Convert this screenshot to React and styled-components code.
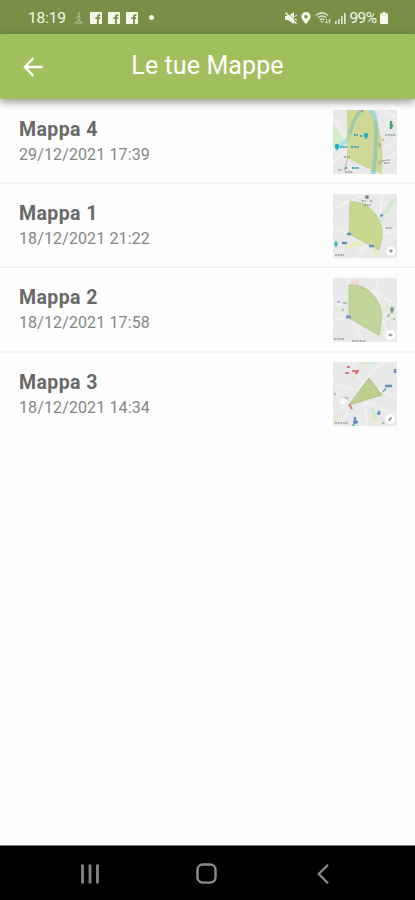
import styled, { createGlobalStyle } from "styled-components";

const GlobalStyle = createGlobalStyle`
  * {
    box-sizing: border-box;
  }

  body {
    margin: 0;
    background: #fff;
    font-family: Roboto, "Liberation Sans", sans-serif;
  }
`;

const Screen = styled.div`
  display: flex;
  flex-direction: column;
  width: 100%;
  height: 900px;
  background: #fefefe;
`;

const StatusBar = styled.div`
  display: flex;
  align-items: center;
  justify-content: space-between;
  height: 34px;
  padding: 1px 27px 0 28px;
  background: #778f46;
  color: #f5f8ea;
`;

const StatusGroup = styled.div`
  display: flex;
  align-items: center;
  gap: ${(props) => props.$gap}px;
`;

const StatusText = styled.span`
  width: ${(props) => props.$width}px;
  font-size: 15.5px;
  line-height: 18px;
  letter-spacing: ${(props) => props.$spacing || 0}px;
  white-space: nowrap;
`;

const Glyph = styled.svg`
  display: block;
  flex: none;
  opacity: ${(props) => props.$opacity || 1};
`;

const Dot = styled.span`
  width: 5px;
  height: 5px;
  margin-left: 4.5px;
  border-radius: 50%;
  background: #f5f8ea;
`;

const Header = styled.header`
  display: grid;
  grid-template-columns: 66px 1fr 66px;
  align-items: center;
  height: 65px;
  flex: none;
  background: #a1c05d;
  color: #fff;
  box-shadow: 0 3px 8px rgba(40, 50, 40, 0.5);
  z-index: 1;
`;

const BackButton = styled.button`
  display: flex;
  align-items: center;
  justify-content: center;
  height: 65px;
  padding: 0;
  border: 0;
  background: none;
  color: inherit;
`;

const Title = styled.h1`
  margin: 0;
  padding-bottom: 1px;
  font-size: 25px;
  font-weight: 400;
  line-height: 30px;
  letter-spacing: 0.1px;
  text-align: center;
  white-space: nowrap;
`;

const List = styled.ul`
  flex: 1;
  margin: 0;
  padding: 1px 0 0;
  list-style: none;
`;

const Row = styled.li`
  display: flex;
  align-items: center;
  justify-content: space-between;
  height: 84.2px;
  padding: 1px 18px 0 19px;
  border-bottom: 2px solid #f3f3f3;

  &:last-child {
    border-color: transparent;
  }
`;

const Info = styled.div`
  padding-top: 1px;
`;

const Name = styled.div`
  color: #686868;
  font-size: 19.5px;
  font-weight: 700;
  line-height: 26px;
  letter-spacing: 0.4px;
`;

const CreatedAt = styled.div`
  color: #858585;
  font-size: 16px;
  line-height: 24px;
  letter-spacing: 0.12px;
`;

const Thumb = styled.svg`
  display: block;
  width: 64px;
  height: 64px;
  background: #e8e9e8;
`;

const NavBar = styled.nav`
  display: grid;
  grid-template-columns: 116px 22px 1fr;
  align-items: center;
  height: 55px;
  padding: 1px 86px 0 80px;
  border-top: 1px solid #777;
  background: #000;

  > :last-child {
    justify-self: end;
  }
`;

const Facebook = () => (
  <Glyph width="12" height="12" viewBox="0 0 12 12">
    <rect width="12" height="12" rx="1" fill="#f5f8ea" />
    <path d="M7 12V7H5.4V5.2H7V4.2Q7 2.2 9 2.2H10.4V3.9H9.4Q8.8 3.9 8.8 4.5V5.2H10.4L10.1 7H8.8V12Z" fill="#778f46" />
  </Glyph>
);

const MapFour = () => (
  <Thumb viewBox="0 0 64 64">
    <path d="M0 14L7 24L12 32L0 37Z" fill="#d5ebca" />
    <path d="M0 8L12 27M0 52L14 40M50 0L64 8M49 38L64 30M50 50L64 43" stroke="#f5f5f5" strokeWidth="1.4" />
    <path d="M28 0C20 10 18 17 17 24C15 32 8 36 2 39" fill="none" stroke="#a8dcf3" strokeWidth="4" />
    <path d="M38 0C44 9 44 22 43 34S41 53 40 64" fill="none" stroke="#9ed9e8" strokeWidth="5" />
    <path d="M14 0H35Q43 7 46 20Q51 34 49 64L32 57L14 48Z" fill="#c3cf6e" fillOpacity=".67" />
    <path d="M28 0C20 10 18 17 17 24M43 12C44 28 42 45 41 62" fill="none" stroke="#8fc7b0" strokeWidth="3" opacity=".75" />
    <path d="M15 47L11 61" stroke="#eea49c" />
    <g fill="#20b3bf">
      <circle cx="33" cy="25" r="2.2" />
      <path d="M31 26H35L33 30Z" />
      <circle cx="4" cy="36" r="2.2" />
      <path d="M2 37H6L4 41Z" />
    </g>
    <path d="M21 25H25M27 26H30M7 37H14M18 37H26M12 58H15M19 58H26" stroke="#43a7ba" strokeWidth="1.8" strokeDasharray="2 .8" />
    <path d="M58 11V19M57 15L60 16" stroke="#38a36c" strokeWidth="2.4" />
    <path d="M52 25H63M46 54Q47 50 57 50M51 53H57M5 60H9M12 62H20M28 1H31M11 47H17" fill="none" stroke="#7c8585" strokeWidth="1.3" strokeDasharray="2 .7" opacity=".75" />
    <path d="M46 33L47 37M50 29V31" stroke="#cf8a76" strokeWidth="1.2" />
  </Thumb>
);

const MapOne = () => (
  <Thumb viewBox="0 0 64 64">
    <path d="M0 15L17 7L34 0M0 34L16 40L30 33M50 0L44 30L64 44M0 61L29 46L64 36M22 64L35 49" fill="none" stroke="#f1f2f1" strokeWidth="1.5" />
    <path d="M64 4Q56 10 55 17Q48 17 49 28" fill="none" stroke="#d1e9d1" strokeWidth="3" />
    <path d="M12 54L29 48M41 55L46 63" stroke="#eeecad" strokeWidth="3" />
    <path d="M17 7L31 10Q42 17 47 28Q50 35 49 44L46 56L16 40Z" fill="#c9d891" stroke="#b9c981" strokeWidth=".8" />
    <path d="M19 33L30 18M25 42L42 26M31 49L46 38" stroke="#d8e47b" strokeWidth="1" opacity=".5" />
    <circle cx="34" cy="3" r="2" fill="#858c8c" />
    <path d="M31 11H38M53 34H59M29 7H33M37 7H40" stroke="#7d8787" strokeWidth="1.4" strokeDasharray="2 .8" opacity=".75" />
    <path d="M14 40H18M9 49H14M36 52H41M47 22L50 21" stroke="#6a93c4" strokeWidth="2.3" />
    <path d="M3 47V53M1 50H5" stroke="#53b9b9" strokeWidth="2" />
    <path d="M2 61H11" stroke="#7a7a7a" strokeWidth="1.5" strokeDasharray="2 .7" opacity=".75" />
    <circle cx="58" cy="57" r="4.5" fill="#fff" />
    <circle cx="58" cy="57" r="1.7" fill="#999" />
  </Thumb>
);

const MapTwo = () => (
  <Thumb viewBox="0 0 64 64">
    <path d="M0 24L15 29M0 43L17 39L31 64M12 0L17 8M38 12L64 27M49 44L64 37M43 0L47 30L56 64" fill="none" stroke="#f1f1f1" strokeWidth="1.5" />
    <path d="M2 30L9 33M48 47V62M54 27L59 44" stroke="#dfedcf" strokeWidth="3" />
    <path d="M16 5L26 1V7" fill="#f4d6cf" />
    <path d="M16 7Q31 6 40 17Q48 26 49 38L46 57L16 40Z" fill="#c0d69b" stroke="#abc489" strokeWidth=".8" />
    <path d="M13 39H18" stroke="#7190d3" strokeWidth="3" />
    <path d="M4 24H7M10 25H14M9 32H11M54 39L57 36M60 41H62" stroke="#8d9599" strokeWidth="1.6" opacity=".75" />
    <circle cx="59" cy="31" r="2" fill="#80999a" />
    <path d="M57 32H61L59 36Z" fill="#80999a" />
    <path d="M1 61H11M19 63H33" stroke="#858585" strokeWidth="1.4" strokeDasharray="2 .7" opacity=".75" />
    <circle cx="57.5" cy="57" r="5" fill="#fff" />
    <path d="M55.5 57H59.5M57.5 55.5V58.5" stroke="#999" strokeWidth="1.3" />
  </Thumb>
);

const MapThree = () => (
  <Thumb viewBox="0 0 64 64">
    <path d="M0 20L23 28L50 0M0 51L24 37L64 53M20 0L29 21L64 36M32 38L34 64M8 64L17 43L3 30" fill="none" stroke="#f2f2f2" strokeWidth="1.5" />
    <path d="M28 1H42M39 46L43 59M53 24H60" fill="none" stroke="#cfebd5" strokeWidth="3.5" />
    <path d="M18 18L30 2M0 60L8 52M35 53L46 61M49 31L59 19" stroke="#f5e6bd" strokeWidth="1.7" />
    <path d="M36 16L49 33L16 43Z" fill="#bccf8f" stroke="#a9be7d" strokeWidth=".8" />
    <path d="M12 11H16M19 9H26M14 5H17M22 11H25M16 42L19 47" stroke="#d9797d" strokeWidth="2" />
    <path d="M62 7V11M52 24H59M46 49V53M22 55V62M20 60H25" stroke="#6b8acb" strokeWidth="2.5" />
    <path d="M44 52L47 49M50 30L53 26M19 63H22" stroke="#56b2b4" strokeWidth="1.4" />
    <path d="M2 31V34M8 36H16M2 61H15M49 61H52" stroke="#8a8a8a" strokeWidth="1.4" strokeDasharray="2 .7" opacity=".75" />
    <circle cx="10" cy="39" r="3.5" fill="#f7faf7" />
    <circle cx="57" cy="57" r="5" fill="#fff" />
    <path d="M55.5 58.5L58.5 55.5" stroke="#777" strokeWidth="1.5" />
  </Thumb>
);

const maps = [
  { name: "Mappa 4", date: "29/12/2021 17:39", Preview: MapFour },
  { name: "Mappa 1", date: "18/12/2021 21:22", Preview: MapOne },
  { name: "Mappa 2", date: "18/12/2021 17:58", Preview: MapTwo },
  { name: "Mappa 3", date: "18/12/2021 14:34", Preview: MapThree },
];

const App = () => (
  <Screen>
    <GlobalStyle />
    <StatusBar>
      <StatusGroup $gap={6}>
        <StatusText $width={39} $spacing={-0.15}>18:19</StatusText>
        <Glyph width="11" height="12" viewBox="0 0 11 12" fill="none" stroke="#f5f8ea" $opacity={0.45}>
          <circle cx="6" cy="1.5" r="1" />
          <path d="M6 3V7L8 11M6 7L4 11M3 6L6 4L8 6M1 11H10" />
        </Glyph>
        <Facebook />
        <Facebook />
        <Facebook />
        <Dot />
      </StatusGroup>
      <StatusGroup $gap={4}>
        <Glyph width="12" height="12" viewBox="0 0 12 12" fill="#f5f8ea">
          <path d="M0 4H3L9 0V12L3 8H0Z" />
          <path d="M9.5 7L12 8M9.5 4.5L12 3" stroke="#f5f8ea" />
          <path d="M2 0L12 10" stroke="#778f46" strokeWidth=".7" />
          <path d="M.6 .8L11.4 11.6" stroke="#f5f8ea" strokeWidth="1.5" />
        </Glyph>
        <Glyph width="10" height="12" viewBox="0 0 10 12" fill="#f5f8ea">
          <path fillRule="evenodd" d="M5 0A4.6 4.6 0 0 0 .4 4.6C.4 7.8 5 12 5 12S9.6 7.8 9.6 4.6A4.6 4.6 0 0 0 5 0ZM5 3A1.7 1.7 0 1 1 5 6.4A1.7 1.7 0 0 1 5 3Z" />
        </Glyph>
        <Glyph width="16" height="12" viewBox="0 0 16 12" fill="none" stroke="#f5f8ea" $opacity={0.8}>
          <path d="M.8 3.5Q7 -1.7 13.2 3.5M2.8 5.7Q7 2.5 11.2 5.7M4.8 7.9Q7 6.3 9.2 7.9" strokeWidth="1.5" />
          <path d="M5.5 9H8.5L7 11Z" fill="#f5f8ea" stroke="none" />
          <path d="M11.5 7V11M10.2 9.8L11.5 11.3L12.8 9.8M14.5 11.5V7.8M13.4 9L14.5 7.6L15.6 9" strokeWidth=".9" />
        </Glyph>
        <Glyph width="11" height="12" viewBox="0 0 11 12" fill="#f5f8ea" $opacity={0.8}>
          <path d="M0 9H1.7V12H0ZM3 7H4.7V12H3ZM6 4H7.7V12H6ZM9 1H10.7V12H9Z" />
        </Glyph>
        <StatusText $width={26.5} $spacing={-0.6}>99%</StatusText>
        <Glyph width="8" height="12" viewBox="0 0 8 12" fill="#f5f8ea">
          <path d="M2.5 0H5.5V1.3H7Q8 1.3 8 2.3V11Q8 12 7 12H1Q0 12 0 11V2.3Q0 1.3 1 1.3H2.5Z" />
        </Glyph>
      </StatusGroup>
    </StatusBar>
    <Header>
      <BackButton aria-label="Indietro">
        <Glyph width="20" height="20" viewBox="0 0 20 20" fill="none" stroke="currentColor" strokeWidth="2.3">
          <path d="M10.5 1L1.8 10L10.5 19M2 10H19.5" />
        </Glyph>
      </BackButton>
      <Title>Le tue Mappe</Title>
    </Header>
    <List>
      {maps.map(({ name, date, Preview }) => (
        <Row key={name}>
          <Info>
            <Name>{name}</Name>
            <CreatedAt>{date}</CreatedAt>
          </Info>
          <Preview />
        </Row>
      ))}
    </List>
    <NavBar>
      <Glyph width="20" height="20" viewBox="0 0 20 20" stroke="#858585" strokeWidth="2.8">
        <path d="M2.5 .5V19.5M10 .5V19.5M17.5 .5V19.5" />
      </Glyph>
      <Glyph width="21" height="21" viewBox="0 0 22 22" fill="none" stroke="#8c8c8c" strokeWidth="2.5">
        <rect x="1.5" y="1.5" width="19" height="19" rx="5.5" />
      </Glyph>
      <Glyph width="12" height="20" viewBox="0 0 12 20" fill="none" stroke="#8c8c8c" strokeWidth="2.3">
        <path d="M11 .8L1.8 10L11 19.2" />
      </Glyph>
    </NavBar>
  </Screen>
);

export default App;
